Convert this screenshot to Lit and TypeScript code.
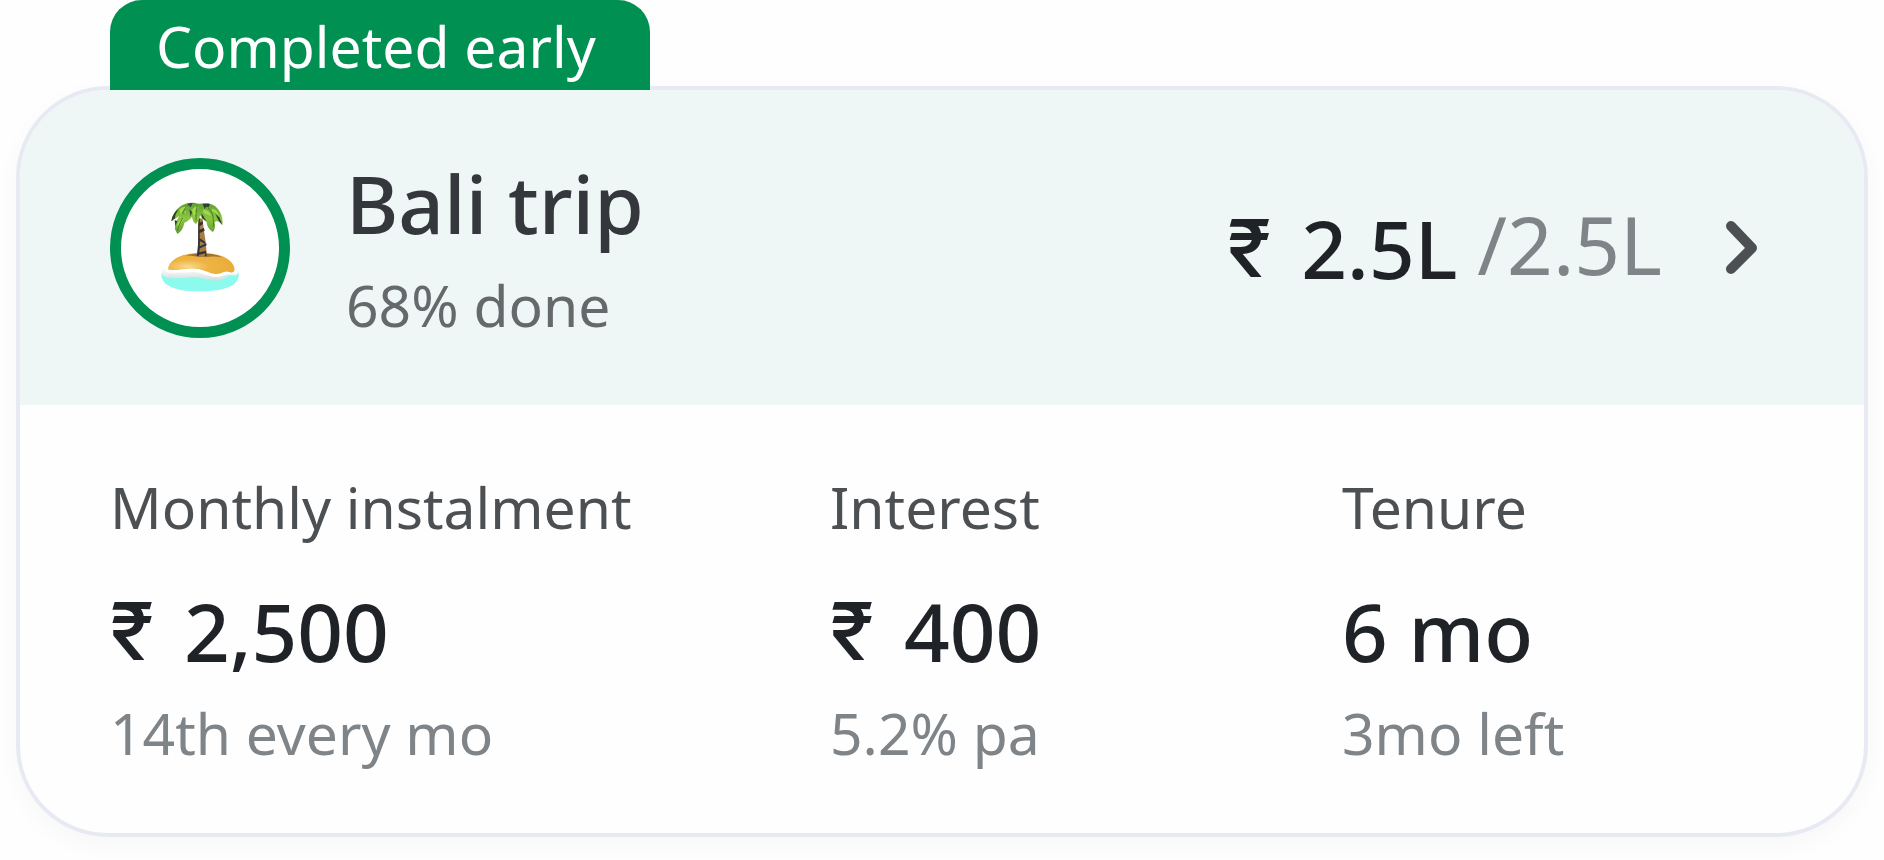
import { LitElement, html, css, nothing } from "lit";
import { customElement } from "lit/decorators.js";

interface Detail {
  label: string;
  currency?: string;
  value: string;
  note: string;
}

const DETAILS: Detail[] = [
  { label: "Monthly instalment", currency: "₹", value: "2,500", note: "14th every mo" },
  { label: "Interest", currency: "₹", value: "400", note: "5.2% pa" },
  { label: "Tenure", value: "6 mo", note: "3mo left" },
];

@customElement("island-icon")
class IslandIcon extends LitElement {
  static styles = css`
    :host {
      display: block;
      width: 120px;
      height: 120px;
    }
    svg {
      display: block;
      width: 100%;
      height: 100%;
    }
  `;

  render() {
    return html`
      <svg viewBox="0 22 360 360" aria-hidden="true">
        <defs>
          <radialGradient id="sand" cx="0.3" cy="0.65" r="0.7">
            <stop offset="0" stop-color="#f8d98e" />
            <stop offset="0.45" stop-color="#eeb443" />
            <stop offset="1" stop-color="#e9ac38" />
          </radialGradient>
          <linearGradient id="foam" x1="0" y1="0" x2="0" y2="1">
            <stop offset="0" stop-color="#ffffff" />
            <stop offset="1" stop-color="#d3dcd9" />
          </linearGradient>
          <linearGradient id="leaf" x1="0" y1="0" x2="0" y2="1">
            <stop offset="0" stop-color="#5f9e33" />
            <stop offset="0.5" stop-color="#8cc63f" />
            <stop offset="1" stop-color="#629a35" />
          </linearGradient>
        </defs>
        <path d="M65 276C60 300 78 332 180 332S302 300 295 274Z" fill="#8cfbee" />
        <path d="M66 268C70 262 80 260 90 264L270 262C284 264 294 266 296 274C294 284 286 288 276 284C262 282 254 298 232 300C204 302 184 286 150 290C112 294 76 296 66 280Z" fill="url(#foam)" />
        <path d="M84 266C86 238 124 216 184 216C246 216 282 240 284 266C284 276 276 278 266 274C250 270 244 282 226 280C204 278 190 264 158 264C128 264 110 272 94 270C88 270 84 270 84 266Z" fill="url(#sand)" />
        <path d="M84 266C94 272 128 264 158 264C190 264 204 278 226 280C244 282 250 270 266 274C276 278 284 276 284 266L292 270C294 280 284 282 272 280C256 278 248 289 228 289C202 288 186 273 156 274C126 274 84 282 76 270Z" fill="#ffffff" />
        <path d="M134 226C150 216 224 214 246 230C226 224 206 230 184 229C166 229 150 222 134 226Z" fill="#9a7136" />
        <path d="M176 112L188 114C190 150 200 184 200 226C190 230 178 229 170 226C178 188 172 150 176 112Z" fill="#a87b40" />
        <path d="M176 114L180 114C176 152 184 190 176 227L170 226C178 188 172 150 176 114ZM176 128L188 122L189 130L176 138ZM177 148L192 142L194 150L178 158ZM178 172L196 184L196 190L178 180ZM176 198L199 188L200 194L174 206ZM173 216L198 210L200 226L194 227L196 218L172 224Z" fill="#30343a" />
        <path d="M168 68C144 62 102 74 94 122C104 114 110 112 118 106C110 118 104 128 105 146L112 160C124 152 130 142 133 126C142 122 150 116 156 108C158 120 162 126 168 130C176 122 180 112 180 104C186 114 194 122 200 124C200 138 210 148 219 154C226 146 226 134 224 124C234 118 240 126 247 133C252 108 236 74 208 69C194 65 180 72 168 68Z" fill="url(#leaf)" />
        <path d="M142 69L158 67L152 80L148 76ZM188 69L210 69L206 80L198 78L194 86ZM94 122C96 106 106 90 116 86C108 98 104 108 106 112ZM148 86L156 94L152 108ZM184 98L190 106L200 122L186 112ZM226 100L238 110L247 133L236 120ZM104 118L112 122L106 136Z" fill="#2f4030" />
        <path d="M118 88C126 78 134 76 144 80C134 84 126 92 122 104ZM156 90C160 80 166 76 176 78C168 86 164 96 164 112ZM190 86C200 88 208 92 214 106C204 102 196 100 190 96ZM216 84C228 86 234 94 236 104C228 98 222 94 216 92ZM112 128C118 118 124 114 132 114C126 122 120 132 114 144Z" fill="#a3d84c" />
        <path d="M150 72C140 76 132 84 128 100M172 74C168 88 168 100 168 120M204 82C216 92 222 104 220 138M128 112C122 124 116 134 112 150" fill="none" stroke="#487f2a" stroke-width="3" />
        <circle cx="165" cy="98" r="2" fill="#f1da60" />
        <circle cx="136" cy="94" r="2" fill="#f1da60" />
      </svg>
    `;
  }
}

@customElement("app-root")
class AppRoot extends LitElement {
  static styles = css`
    :host {
      display: block;
      padding: 0 16px 24px;
      background: #fefefe;
      font-family: "Noto Sans", "Open Sans", sans-serif;
      font-size: 57px;
      line-height: 72px;
    }
    h2,
    p,
    dl,
    dt,
    dd {
      margin: 0;
      font-weight: 400;
    }
    .status {
      position: relative;
      z-index: 1;
      width: fit-content;
      margin: 0 0 -4px 94px;
      padding: 10px 54px 8px 46px;
      border-radius: 32px 32px 0 0;
      background: #009051;
      color: #ffffff;
    }
    .card {
      overflow: hidden;
      border: 4px solid #e7eaf2;
      border-radius: 92px;
      background: #fefefe;
      box-shadow: 0 8px 24px rgba(30, 34, 60, 0.03);
    }
    .head {
      display: flex;
      align-items: center;
      padding: 65px 90px 64px;
      background: #eef7f5;
    }
    .ring {
      display: flex;
      align-items: center;
      justify-content: center;
      box-sizing: border-box;
      width: 180px;
      height: 180px;
      border: 11px solid #009051;
      border-radius: 50%;
      background: #ffffff;
    }
    .summary {
      display: flex;
      flex-direction: column;
      gap: 18px;
      margin-left: 56px;
    }
    .title,
    .value,
    .goal {
      font-size: 80px;
      line-height: 96px;
    }
    .title {
      color: #34373b;
      font-weight: 500;
    }
    .progress {
      color: #66696c;
    }
    .totals {
      display: flex;
      align-items: flex-start;
      gap: 20px;
      margin-left: auto;
    }
    .value {
      display: flex;
      color: #1f2226;
      font-weight: 500;
    }
    .currency {
      width: 74px;
      font-family: Inter, "Noto Sans", sans-serif;
    }
    .goal {
      color: #7f8488;
      line-height: 88px;
    }
    .open {
      display: block;
      width: 64px;
      height: 64px;
      margin-left: 48px;
      padding: 0;
      border: 0;
      background: none;
      color: #4d5053;
      cursor: pointer;
    }
    .open svg {
      display: block;
    }
    .details {
      display: grid;
      grid-template-columns: 720fr 512fr 432fr;
      padding: 66px 90px 64px;
    }
    .detail {
      display: flex;
      flex-direction: column;
    }
    .label {
      margin-bottom: 40px;
      color: #4d5053;
    }
    .note {
      margin-top: 18px;
      color: #7f8488;
    }
  `;

  private amount(value: string, currency?: string) {
    return html`${currency ? html`<span class="currency">${currency}</span>` : nothing}<span>${value}</span>`;
  }

  render() {
    return html`
      <p class="status">Completed early</p>
      <article class="card">
        <header class="head">
          <div class="ring"><island-icon></island-icon></div>
          <div class="summary">
            <h2 class="title">Bali trip</h2>
            <p class="progress">68% done</p>
          </div>
          <div class="totals">
            <p class="value">${this.amount("2.5L", "₹")}</p>
            <p class="goal">/2.5L</p>
          </div>
          <button class="open" type="button" aria-label="Open goal">
            <svg width="64" height="64" viewBox="0 0 64 64" fill="none" aria-hidden="true">
              <path d="M21 10L42 32L21 53" stroke="currentColor" stroke-width="10" stroke-linecap="round" stroke-linejoin="round" />
            </svg>
          </button>
        </header>
        <dl class="details">
          ${DETAILS.map(
            (d) => html`
              <div class="detail">
                <dt class="label">${d.label}</dt>
                <dd class="value">${this.amount(d.value, d.currency)}</dd>
                <dd class="note">${d.note}</dd>
              </div>
            `
          )}
        </dl>
      </article>
    `;
  }
}
